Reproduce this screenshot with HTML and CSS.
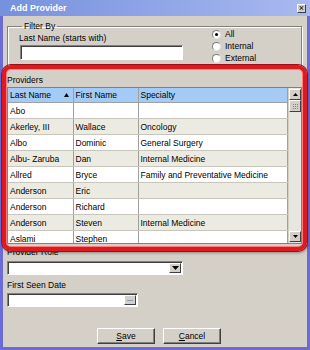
FILE: index.html
```html
<!DOCTYPE html>
<html lang="en">
<head>
  <meta charset="UTF-8">
  <title>Add Provider</title>
  <link rel="stylesheet" href="styles.css">
</head>
<body>
  <div class="window">
    <div class="titlebar">
      <span>Add Provider</span>
      <span class="close">&times;</span>
    </div>

    <div class="content">
      <fieldset class="filter">
        <legend>Filter By</legend>
        <div class="filter-row">
          <div class="name-col">
            <label>Last Name (starts with)</label>
            <div class="textbox name-box"></div>
          </div>
          <div class="radios">
            <div class="radio-row"><span class="radio checked"></span>All</div>
            <div class="radio-row"><span class="radio"></span>Internal</div>
            <div class="radio-row"><span class="radio"></span>External</div>
          </div>
        </div>
      </fieldset>

      <div class="section-label">Providers</div>
      <div class="grid">
        <div class="rows">
          <table>
            <colgroup>
              <col class="c-last">
              <col class="c-first">
              <col>
            </colgroup>
            <thead>
              <tr>
                <th>Last Name <svg class="sort" width="5" height="4" viewBox="0 0 5 4"><path d="M2.5 0 L5 4 L0 4 Z" fill="#000"/></svg></th>
                <th>First Name</th>
                <th>Specialty</th>
              </tr>
            </thead>
            <tbody>
              <tr><td>Abo</td><td></td><td></td></tr>
              <tr><td>Akerley, III</td><td>Wallace</td><td>Oncology</td></tr>
              <tr><td>Albo</td><td>Dominic</td><td>General Surgery</td></tr>
              <tr><td>Albu- Zaruba</td><td>Dan</td><td>Internal Medicine</td></tr>
              <tr><td>Allred</td><td>Bryce</td><td>Family and Preventative Medicine</td></tr>
              <tr><td>Anderson</td><td>Eric</td><td></td></tr>
              <tr><td>Anderson</td><td>Richard</td><td></td></tr>
              <tr><td>Anderson</td><td>Steven</td><td>Internal Medicine</td></tr>
              <tr><td>Aslami</td><td>Stephen</td><td></td></tr>
            </tbody>
          </table>
        </div>
        <div class="scrollbar">
          <div class="sb-btn">
            <svg width="5" height="3" viewBox="0 0 5 3"><path d="M2.5 0 L5 3 L0 3 Z" fill="#000"/></svg>
          </div>
          <div class="sb-btn thumb">
            <svg width="5" height="5" viewBox="0 0 5 5" fill="#808080">
              <rect x="0" y="0" width="1" height="1"/><rect x="2" y="0" width="1" height="1"/><rect x="4" y="0" width="1" height="1"/>
              <rect x="0" y="2" width="1" height="1"/><rect x="2" y="2" width="1" height="1"/><rect x="4" y="2" width="1" height="1"/>
              <rect x="0" y="4" width="1" height="1"/><rect x="2" y="4" width="1" height="1"/><rect x="4" y="4" width="1" height="1"/>
            </svg>
          </div>
          <div class="sb-track"></div>
          <div class="sb-btn">
            <svg width="5" height="3" viewBox="0 0 5 3"><path d="M0 0 L5 0 L2.5 3 Z" fill="#000"/></svg>
          </div>
        </div>
      </div>

      <div class="field-label role-label">Provider Role</div>
      <div class="textbox combo">
        <span class="drop-btn">
          <svg width="7" height="4" viewBox="0 0 7 4"><path d="M0 0 L7 0 L3.5 4 Z" fill="#000"/></svg>
        </span>
      </div>

      <div class="field-label">First Seen Date</div>
      <div class="textbox date">
        <span class="dots-btn">...</span>
      </div>

      <div class="buttons">
        <button class="btn"><u>S</u>ave</button>
        <button class="btn"><u>C</u>ancel</button>
      </div>
    </div>

    <div class="highlight"></div>
  </div>
</body>
</html>
```

FILE: styles.css
```css
body {
  margin: 0;
  background: #d4d0c8;
}
.window {
  position: relative;
  width: 310px;
  height: 350px;
  font-family: "Liberation Sans", Arial, sans-serif;
  font-size: 8.5px;
  color: #000;
  background: #d4d0c8;
}
.titlebar {
  height: 16px;
  display: flex;
  align-items: center;
  justify-content: space-between;
  padding: 0 4px 0 10px;
  background: linear-gradient(to right, #7691dd, #a9b9f0);
  color: #fff;
  font-weight: 700;
  font-size: 9px;
  box-sizing: border-box;
}
.close {
  width: 9px;
  height: 9px;
  box-sizing: border-box;
  background: #d4d0c8;
  border: 1px solid;
  border-color: #fff #404040 #404040 #fff;
  color: #000;
  font-size: 9px;
  line-height: 6px;
  text-align: center;
  font-weight: 400;
}
.content {
  height: 334px;
  box-sizing: border-box;
  border: 3px solid #6b6bd6;
  border-top: 0;
  padding-top: 3px;
}

/* filter group */
.filter {
  margin: 2px 5px 0 4px;
  padding: 2px 0 3px 11px;
  border: 1px solid #808080;
  box-shadow: 1px 1px 0 #fff, inset 1px 1px 0 #fff;
}
.filter legend {
  margin-left: 3px;
  padding: 0 2px;
  line-height: 10px;
}
.filter-row {
  display: flex;
}
.name-col label {
  display: block;
  line-height: 10px;
}
.textbox {
  background: #fff;
  box-sizing: border-box;
  border: 1px solid;
  border-color: #808080 #fff #fff #808080;
  box-shadow: inset 1px 1px 0 #404040;
}
.name-box {
  width: 163px;
  height: 15px;
  margin: 2px 0 0 1px;
}
.radios {
  margin: -5px 0 0 29px;
}
.radio-row {
  display: flex;
  align-items: center;
  height: 12px;
}
.radio {
  width: 9px;
  height: 9px;
  box-sizing: border-box;
  border-radius: 50%;
  border: 1px solid #808080;
  border-right-color: #e0e0e0;
  border-bottom-color: #e0e0e0;
  background: #fff;
  margin-right: 4px;
  position: relative;
}
.radio.checked::after {
  content: "";
  position: absolute;
  left: 2px;
  top: 2px;
  width: 3px;
  height: 3px;
  border-radius: 50%;
  background: #000;
}

/* providers grid */
.section-label {
  margin: 7px 0 0 4px;
  line-height: 10px;
}
.grid {
  display: flex;
  margin: 2px 5px 0 4px;
  height: 157px;
  box-sizing: border-box;
  border: 1px solid #808080;
  background: #fff;
}
.rows {
  flex: 1;
  overflow: hidden;
}
table {
  width: 100%;
  table-layout: fixed;
  border-collapse: collapse;
}
.c-last { width: 65px; }
.c-first { width: 65px; }
th, td {
  text-align: left;
  font-weight: 400;
  padding: 0 2px;
  white-space: nowrap;
  overflow: hidden;
  border-right: 1px solid #a0a0a0;
}
th {
  height: 14px;
  background: #a3cbf5;
  border-bottom: 1px solid #a0a0a0;
  position: relative;
}
.sort {
  position: absolute;
  right: 4px;
  top: 5px;
}
td {
  height: 15px;
  border-bottom: 1px solid #c8c6bc;
}
tbody tr:nth-child(even) {
  background: #ecebe1;
}
.scrollbar {
  width: 12px;
  display: flex;
  flex-direction: column;
  background: #e8e6e0;
  border-left: 1px solid #d4d0c8;
}
.sb-btn {
  height: 11px;
  flex: none;
  box-sizing: border-box;
  background: #d4d0c8;
  border: 1px solid;
  border-color: #fff #404040 #404040 #fff;
  display: flex;
  align-items: center;
  justify-content: center;
}
.sb-btn:first-child {
  margin-top: 1px;
}
.thumb {
  height: 12px;
}
.sb-track {
  flex: 1;
}
.sb-btn:last-child {
  margin-bottom: 1px;
}

/* lower fields */
.field-label {
  margin: 5px 0 0 4px;
  line-height: 10px;
}
.role-label {
  margin-top: 3px;
}
.combo {
  display: flex;
  justify-content: flex-end;
  width: 176px;
  height: 14px;
  margin: 4px 0 0 4px;
  padding: 1px;
}
.drop-btn, .dots-btn {
  width: 12px;
  box-sizing: border-box;
  background: #d4d0c8;
  border: 1px solid;
  border-color: #fff #404040 #404040 #fff;
  display: flex;
  align-items: center;
  justify-content: center;
}
.date {
  display: flex;
  justify-content: flex-end;
  width: 131px;
  height: 14px;
  margin: 3px 0 0 4px;
  padding: 1px;
}
.dots-btn {
  font-size: 7px;
  line-height: 6px;
  align-items: flex-start;
}
.buttons {
  display: flex;
  gap: 8px;
  margin-top: 21px;
  padding-left: 94px;
}
.btn {
  width: 58px;
  height: 16px;
  padding: 0;
  font-family: inherit;
  font-size: 8.5px;
  color: #000;
  background: #d4d0c8;
  border: 1px solid;
  border-color: #fff #404040 #404040 #fff;
  box-shadow: inset -1px -1px 0 #808080;
}

/* red callout drawn over the providers list */
.highlight {
  position: absolute;
  left: 2px;
  top: 65px;
  width: 305px;
  height: 186px;
  box-sizing: border-box;
  border: 4px solid #dd1a20;
  border-radius: 9px;
  box-shadow: inset 0 0 0 1px #ff7d7d, 0 0 0 1px #9c1014, 1px 2px 3px rgba(0, 0, 0, 0.35);
  pointer-events: none;
}
```
